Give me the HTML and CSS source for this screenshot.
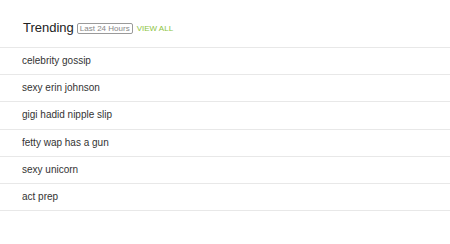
FILE: index.html
```html
<!DOCTYPE html>
<html>
<head>
<meta charset="utf-8">
<link rel="stylesheet" href="styles.css">
</head>
<body>
<div class="trending">
  <div class="header">
    <span class="title">Trending</span>
    <span class="badge">Last 24 Hours</span>
    <a class="viewall">VIEW ALL</a>
  </div>
  <ul class="list">
    <li>celebrity gossip</li>
    <li>sexy erin johnson</li>
    <li>gigi hadid nipple slip</li>
    <li>fetty wap has a gun</li>
    <li>sexy unicorn</li>
    <li>act prep</li>
  </ul>
</div>
</body>
</html>
```
FILE: styles.css
```css
html, body {
  margin: 0;
  padding: 0;
  background: #fff;
}
body {
  font-family: "Liberation Sans", Arial, sans-serif;
  color: #333;
}
.trending {
  width: 450px;
}
.header {
  height: 48px;
  box-sizing: border-box;
  padding: 20px 0 0 23px;
  display: flex;
  align-items: flex-start;
  border-bottom: 1px solid #e8e8e8;
}
.title {
  font-size: 13px;
  line-height: 15px;
  color: #222;
}
.badge {
  margin-left: 3px;
  margin-top: 3px;
  font-size: 8px;
  line-height: 9px;
  color: #888;
  border: 1px solid #9a9a9a;
  border-radius: 2px;
  padding: 0 2px;
}
.viewall {
  margin-left: 4px;
  margin-top: 4px;
  font-size: 8px;
  line-height: 9px;
  color: #8cc43f;
}
.list {
  list-style: none;
  margin: 0;
  padding: 0;
}
.list li {
  height: 26.2px;
  border-bottom: 1px solid #e8e8e8;
  padding-left: 22px;
  font-size: 10px;
  line-height: 26px;
  color: #333;
}
```
